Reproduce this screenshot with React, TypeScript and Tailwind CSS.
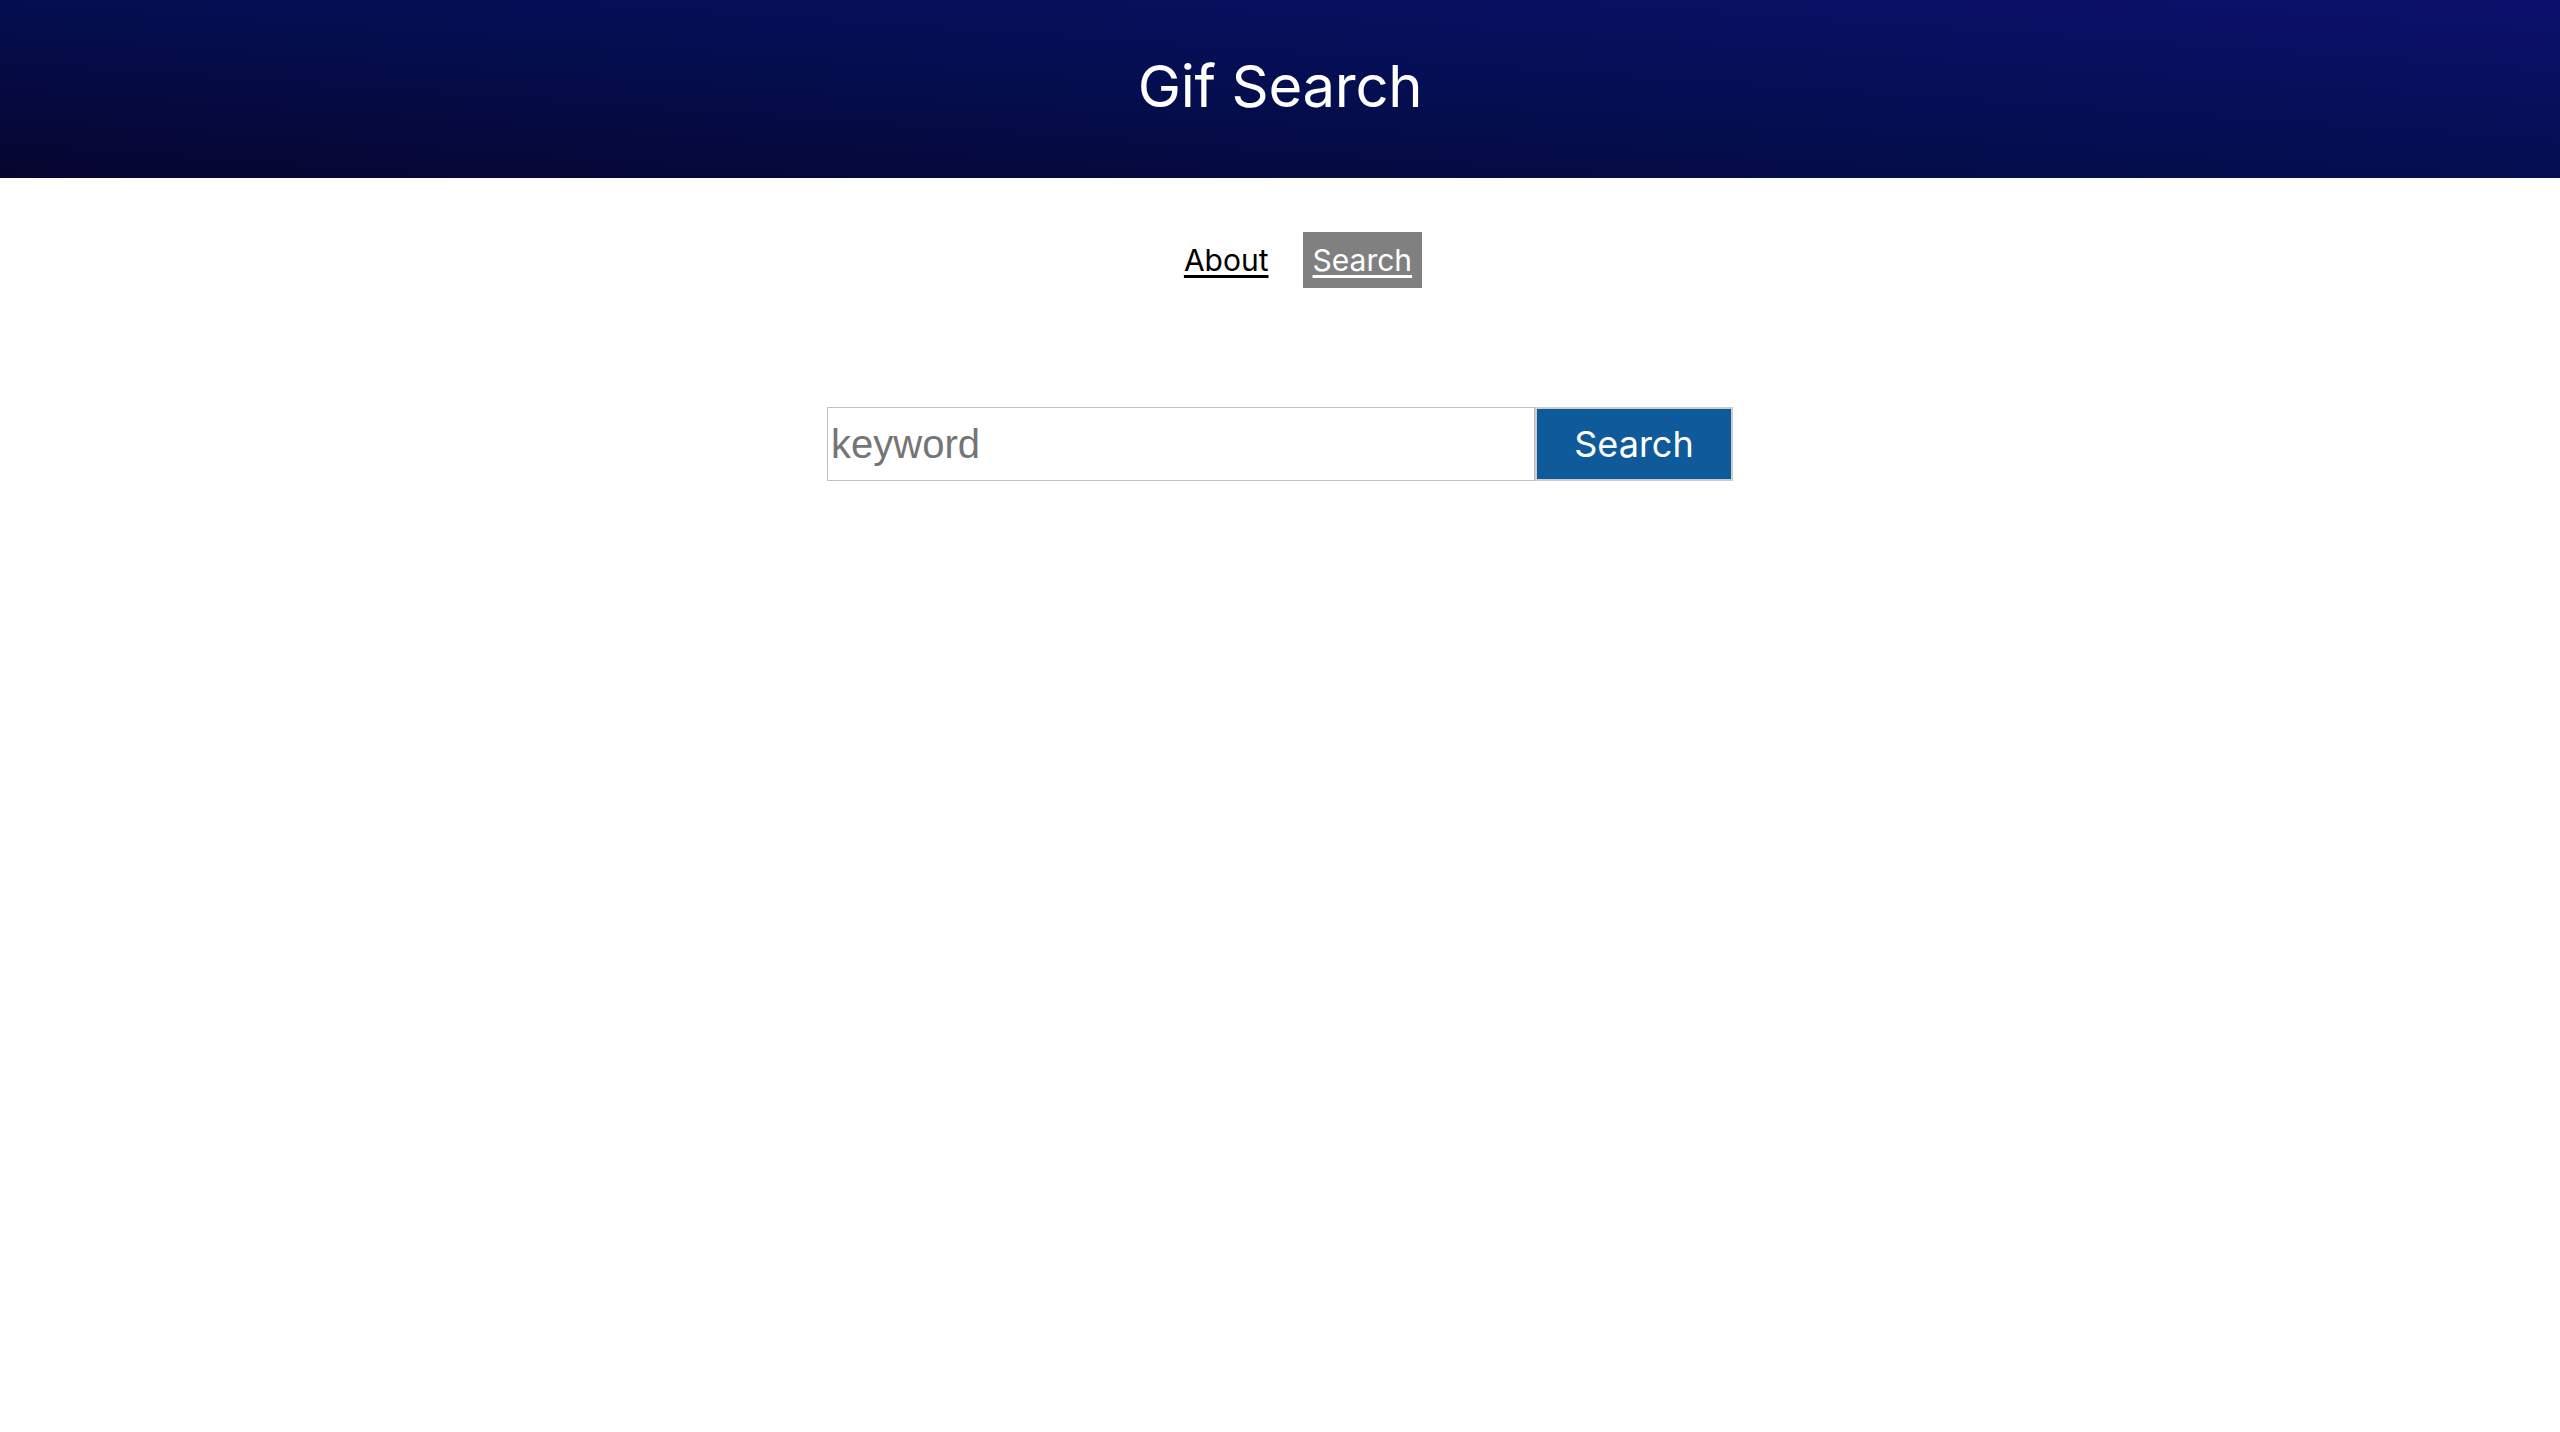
const App = () => {
  return (
    <div className="min-h-screen bg-white" style={{ fontFamily: "Inter, 'Noto Sans', sans-serif" }}>
      {/* Header */}
      <header className="h-[178px] flex items-center justify-center bg-[linear-gradient(to_top_right,#06052f,#040e50_50%,#0c106c)]">
        <h1 className="text-white text-[58px] font-normal leading-none -mt-[6px] tracking-[-0.3px]">Gif Search</h1>
      </header>

      {/* Nav */}
      <nav className="flex justify-center items-center gap-[34px] mt-[54px] pl-[46px]">
        <a href="#" className="text-black text-[30px] underline underline-offset-[4px] decoration-[3px]">
          About
        </a>
        <a
          href="#"
          className="bg-[#808080] text-white text-[30px] h-[56px] px-[10px] flex items-center underline underline-offset-[4px] decoration-[3px]"
        >
          Search
        </a>
      </nav>

      {/* Search form */}
      <form className="flex justify-center mt-[119px]" onSubmit={(e) => e.preventDefault()}>
        <input
          type="text"
          placeholder="keyword"
          className="w-[708px] h-[74px] border border-[#c0c0c0] px-[3px] text-[40px] placeholder:text-[#757575] outline-none"
          style={{ fontFamily: "'Liberation Sans', Arial, sans-serif" }}
        />
        <button
          type="submit"
          className="w-[198px] h-[74px] bg-[#0e5a9b] border-2 border-[#cccccc] text-white text-[36px]"
        >
          Search
        </button>
      </form>
    </div>
  );
};

export default App;
